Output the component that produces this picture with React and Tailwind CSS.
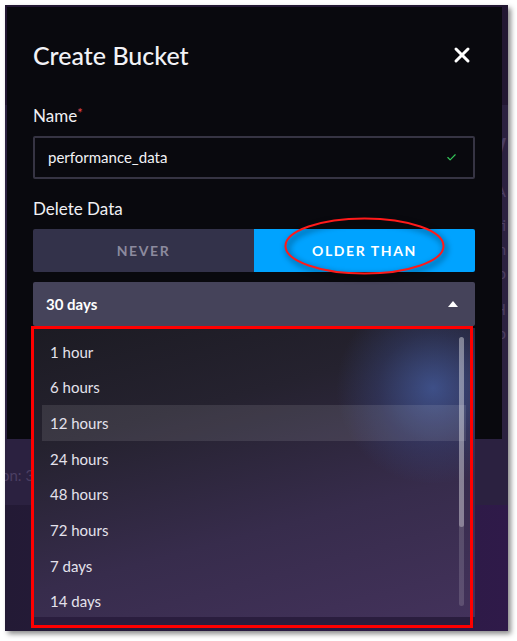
import { Check, X } from 'lucide-react';

const OPTIONS = ['1 hour', '6 hours', '12 hours', '24 hours', '48 hours', '72 hours', '7 days', '14 days'];

function RetentionList() {
  return (
    <div className="absolute left-0 top-[46px] w-[442px] h-[297px] overflow-hidden">
      <div className="relative h-[289px] bg-[linear-gradient(165deg,#1c1b23_0%,#25222f_30%,#372c4c_65%,#43325b_100%)] pt-[6px] px-[9px]">
        <div className="absolute left-[300px] top-[-35px] w-[200px] h-[190px] rounded-full bg-[radial-gradient(circle,rgba(72,102,178,0.65)_0%,rgba(60,80,150,0.3)_40%,rgba(40,40,80,0)_70%)]" />
        {OPTIONS.map((o) => (
          <div
            key={o}
            className={`relative h-[35.7px] flex items-center pl-[8px] text-[15px] text-[#e4e2ec] ${o === '12 hours' ? 'bg-white/10' : ''}`}
          >
            {o}
          </div>
        ))}
        <div className="absolute left-[426px] top-[9px] w-[5px] h-[269px] rounded-full bg-white/15">
          <div className="h-[190px] rounded-full bg-white/30" />
        </div>
      </div>
      <div className="h-[8px] bg-[#2a1d3e]" />
    </div>
  );
}

function Modal() {
  return (
    <div className="absolute left-[2px] top-[2px] w-[495px] h-[432px] bg-[#09090e] pl-[26px] pr-[27px] pt-[34px]">
      <div className="flex items-center justify-between h-[28px]">
        <h2 className="text-[25px] leading-[28px] font-medium text-[#f2f2f6]">Create Bucket</h2>
        <X className="w-[24px] h-[24px] text-white mr-[1px]" strokeWidth={3} />
      </div>

      <div className="mt-[37px] h-[20px] text-[17px] leading-[20px] text-[#f0f0f4]">
        Name<span className="text-[#e5484d] text-[13px] align-top leading-[14px]">*</span>
      </div>
      <div className="mt-[10px] h-[43px] border-2 border-[#363443] rounded-[2px] flex items-center justify-between pl-[13px] pr-[16px]">
        <span className="text-[15px] text-[#f2f2f6]">performance_data</span>
        <Check className="w-[11px] h-[11px] text-[#34c759]" strokeWidth={2.5} />
      </div>

      <div className="mt-[20px] h-[20px] text-[17px] leading-[20px] text-[#f0f0f4]">Delete Data</div>
      <div className="mt-[10px] h-[43px] flex rounded-[2px] overflow-hidden text-[14px] font-bold tracking-[1.6px]">
        <div className="w-[221px] bg-[#33324a] text-[#8c8a9e] flex items-center justify-center">NEVER</div>
        <div className="flex-1 bg-[#00a3ff] text-white flex items-center justify-center">OLDER THAN</div>
      </div>

      <div className="relative mt-[10px]">
        <div className="h-[44px] bg-[#45435a] rounded-[2px] flex items-center justify-between pl-[13px] pr-[17px]">
          <span className="text-[15px] font-bold text-white">30 days</span>
          <svg width="10" height="6" viewBox="0 0 10 6"><path d="M0 6 L5 0 L10 6 Z" fill="#fff" /></svg>
        </div>
        <RetentionList />
      </div>
    </div>
  );
}

export default function App() {
  return (
    <div className="relative w-[517px] h-[641px] bg-white pt-[5px] pl-[5px] font-['Lato',sans-serif]">
      <div className="relative w-[503px] h-[626px] overflow-hidden bg-[linear-gradient(90deg,#231a35_0%,#2a1b42_60%,#2f1a49_100%)] shadow-[3px_3px_5px_rgba(0,0,0,0.45)]">
        {/* page behind the dialog */}
        <div className="h-[100px] bg-[#221732]" />
        <div className="h-[400px] bg-[#2b2140] flex flex-col items-end pr-[2px] text-[15px] text-[#4b3f63] leading-[24px]">
          <span className="mt-[30px] text-[22px] font-bold">W</span>
          <span className="mt-[20px]">A</span>
          <span className="mt-[10px]">ti</span>
          <span>n</span>
          <span>o</span>
          <span className="mt-[12px]">H</span>
          <span>o</span>
          <div className="self-start -ml-[4px] mt-[118px]">on: 3</div>
        </div>
        <Modal />
      </div>

      {/* red annotations */}
      <svg className="absolute left-[280px] top-[214px] drop-shadow-[2px_3px_3px_rgba(0,0,0,0.7)]" width="172" height="68" viewBox="0 0 172 68">
        <ellipse cx="84.5" cy="32" rx="79" ry="27.5" fill="none" stroke="#ff1a1a" strokeWidth="2" />
      </svg>
      <div className="absolute left-[31px] top-[326px] w-[442px] h-[302px] border-[3px] border-[#ff0000]" />
    </div>
  );
}
